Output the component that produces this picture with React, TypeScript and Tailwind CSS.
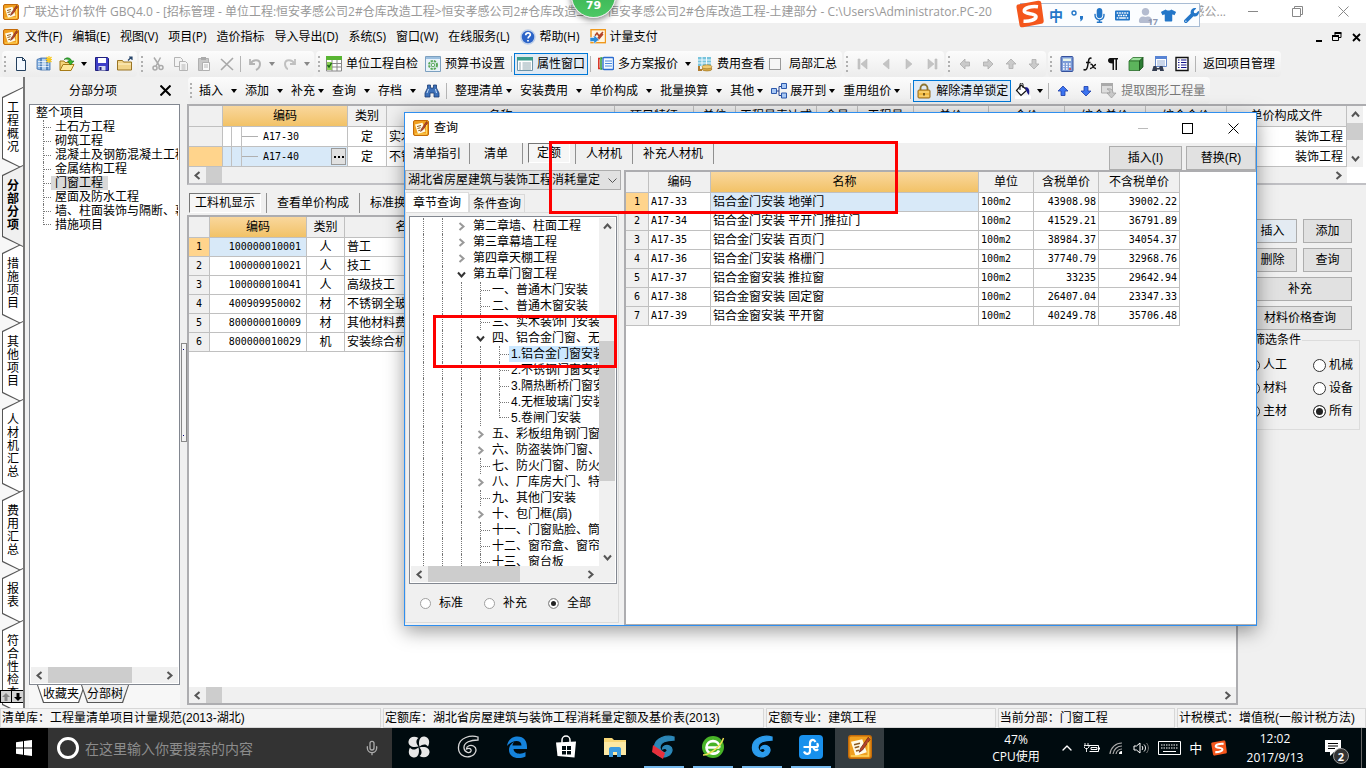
import React from "react";
import { FaTshirt, FaWrench, FaMicrophone, FaKeyboard, FaUser } from "react-icons/fa";
import { LuChevronUp, LuMic } from "react-icons/lu";

const SONG = "font-['Liberation_Sans','Noto_Sans_CJK_SC',sans-serif]";
const UI = "font-['Open_Sans','Noto_Sans_CJK_SC',sans-serif]";
const NUM = "font-['DejaVu_Sans_Mono','Noto_Sans_CJK_SC',monospace] text-[10px]";

type Kids = { children?: React.ReactNode };

/* ---------- icons ---------- */
const Svg = ({ children, s = "size-4", box = "0 0 16 16" }: Kids & { s?: string; box?: string }) => (
  <svg className={`${s} shrink-0`} viewBox={box} fill="none" aria-hidden="true">{children}</svg>
);

const AppIcon = ({ s = "size-4" }: { s?: string }) => (
  <Svg s={s}>
    <rect x=".5" y=".5" width="15" height="15" rx="1.5" fill="#f0a020" stroke="#c46a08" />
    <path d="M2 4.500 9.500 2.800l3 8.700L5 14z" fill="#fffbe8" />
    <path d="M4 6.500l4-1M4.500 8.500l3-.8M5.300 10.700l2-.5" stroke="#8c5a20" />
    <path d="M13.500 1.500 8.300 9l-.8 2.500L9.700 10l5-7z" fill="#b4432a" stroke="#6d2413" strokeWidth=".5" />
    <path d="M2 14h11.500V5" stroke="#ffd65c" />
  </Svg>
);
const Arrow = ({ dim = false }: { dim?: boolean }) => (
  <svg className="h-[4px] w-[6px] shrink-0" viewBox="0 0 6 4" aria-hidden="true"><path d="M0 0h6L3 4z" fill={dim ? "#888" : "#000"} /></svg>
);
const NewDoc = () => <Svg><path d="M3.500 1.500h6l3 3v10h-9z" fill="#f4f9ff" stroke="#24405e" /><path d="M9.500 1.500v3h3" stroke="#24405e" /></Svg>;
const NewProject = () => (
  <Svg>
    <path d="M1 3.500 5 2v12l-4-1zM5 2h6v12H5zM11 4h3v10h-3z" fill="#8eb8e6" stroke="#3c6ca8" strokeWidth=".8" />
    <path d="M2 5.500h11M2 8h11M2 10.500h11M7 3v11M9 3v11" stroke="#fff" strokeWidth=".7" />
    <path d="M13 0v7M9.500 3.500h7M10.500 1l5 5M15.500 1l-5 5" stroke="#f7c81e" strokeWidth="1.200" />
  </Svg>
);
const OpenIcon = () => (
  <Svg>
    <path d="M1 14V5h4l1 1.500h6V9" fill="#f6d57a" stroke="#a67b16" />
    <path d="M1 14.500 4 8.500h11l-3 6z" fill="#ffe89a" stroke="#a67b16" />
    <path d="M5 3.500C8 .5 12 2 12.500 5H15l-3.500 4L8.500 5h2C10 3.500 8 2.500 5 3.500z" fill="#38b430" stroke="#14701a" strokeWidth=".6" />
  </Svg>
);
const SaveIcon = () => <Svg><path d="M1.500 1.500h12l1 1v12h-13z" fill="#3f3fc8" stroke="#20207c" /><path d="M4 2h8v5H4z" fill="#fff" /><path d="M4.500 10h7v4.500h-7z" fill="#d8dcf0" /><path d="M5.500 11h2v3h-2z" fill="#20207c" /></Svg>;
const FolderIcon = () => <Svg><path d="M.5 14V4.500h5l1 1.500h8v8z" fill="#f2d48a" stroke="#9a7424" /><path d="M1 8h13" stroke="#fff3cc" /><path d="M11 4.500 14.500 1M12 1h3v3" stroke="#28466c" strokeWidth="1.200" /></Svg>;
const CutIcon = () => <Svg><path d="M4 1.500 9.500 10M10.500 1.500 6 10" stroke="#aaa" strokeWidth="1.500" /><circle cx="5" cy="12" r="2" stroke="#aaa" strokeWidth="1.500" /><circle cx="11" cy="11.500" r="2" stroke="#aaa" strokeWidth="1.500" /></Svg>;
const CopyIcon = () => <Svg><path d="M1.500 1.500h6l2 2v7h-8z" fill="#f4f4f4" stroke="#b4b4b4" /><path d="M6.500 5.500h6l2 2v7h-8z" fill="#f4f4f4" stroke="#b4b4b4" /><path d="M8.500 9h4M8.500 11h4M8.500 13h4" stroke="#b4b4b4" /></Svg>;
const PasteIcon = () => <Svg><path d="M2.500 2.500h10v12h-10z" fill="#c8c8c8" stroke="#b0b0b0" /><path d="M5 1h5v3H5z" fill="#aaa" /><path d="M6.500 6.500h7v8h-7z" fill="#fafafa" stroke="#b0b0b0" /><path d="M8 9h4M8 11h4" stroke="#b8b8b8" /></Svg>;
const DelIcon = () => <Svg><path d="M2 3l12 11M14 2 2 14" stroke="#a8a8a8" strokeWidth="1.600" /></Svg>;
const UndoIcon = () => <Svg><path d="M3 3v5h5" stroke="#b4b4b4" strokeWidth="1.800" /><path d="M3.500 7.500C6 3 13 3 13 8c0 3-2 5-4 6" stroke="#b4b4b4" strokeWidth="2" /></Svg>;
const RedoIcon = () => <Svg><path d="M13 3v5H8" stroke="#c0c0c0" strokeWidth="1.800" /><path d="M12.500 7.500C10 3 3 3 3 8c0 3 2 5 3 5" stroke="#c0c0c0" strokeWidth="2" /></Svg>;
const CheckSheet = () => <Svg><path d="M.5 1h15v14H.5z" fill="#fff" stroke="#888" /><path d="M0 0h16v4H0z" fill="#58b432" /><path d="M1 7.500h14M1 11h14M6 4v11M11 4v11" stroke="#888" /><path d="M1 6h5v8H1z" fill="#8ed058" /><path d="M1.500 9l1.500 2 2.500-4" stroke="#146414" strokeWidth="1.400" /></Svg>;
const BudgetIcon = () => <Svg><path d="M.5.5h15v15H.5z" fill="#e8f2fa" stroke="#7ca0c0" /><path d="M1 1h14v2H1z" fill="#9cc0e0" /><circle cx="8" cy="9" r="4" stroke="#58a858" strokeWidth="2" strokeDasharray="2.200 1" /><circle cx="8" cy="9" r="1.800" stroke="#58a858" /></Svg>;
const PropIcon = () => <Svg><path d="M.5 1.500h15v13H.5z" fill="#fff" stroke="#6c94a8" /><path d="M0 1h16v3.500H0z" fill="#3c9c8c" /><path d="M2 7h2M5.500 7H14M2 9h2M5.500 9H14M2 11h2M5.500 11H14M2 13h2M5.500 13H14" stroke="#90a8b0" /></Svg>;
const QuoteIcon = () => <Svg><path d="M2 2.500H.8v10H2" stroke="#d83020" strokeWidth="1.500" /><path d="M4.500 2H3v11h1.500" stroke="#2c9c34" strokeWidth="1.500" /><rect x="5" y="1.500" width="10.500" height="12" rx="1" fill="#f4faff" stroke="#2c6cd0" strokeWidth="1.400" /><path d="M7 5h7M7 7.500h7M7 10h7" stroke="#4c88dc" /></Svg>;
const FeeIcon = () => <Svg><path d="M1 1h13v9H1z" fill="#78c4dc" /><path d="M1 4h13M1 7h13M5 1v9M9.500 1v9" stroke="#f0faff" /><ellipse cx="10" cy="13" rx="5" ry="2" fill="#d8a848" stroke="#9c7420" strokeWidth=".6" /><ellipse cx="10" cy="10.800" rx="5" ry="2" fill="#f0cc74" stroke="#9c7420" strokeWidth=".6" /><path d="M2 10v4h3" stroke="#b07c30" strokeWidth="2" /></Svg>;
const Nav = ({ d }: { d: string }) => <Svg><path d={d} fill="#c4c4c4" stroke="#bcbcbc" strokeWidth=".6" /></Svg>;
const BlockArrow = ({ r = 0, blue = false }: { r?: number; blue?: boolean }) => (
  <Svg><path d="M8 3l5 5h-3v4.500H6V8H3z" transform={`rotate(${r} 8 8)`} fill={blue ? "#3c74f0" : "#cacaca"} stroke={blue ? "#1c3ca8" : "#acacac"} strokeWidth=".8" /></Svg>
);
const CalcIcon = () => <Svg><rect x="2" y=".5" width="12" height="15" rx="1" fill="#7c9cd8" stroke="#34509c" /><path d="M4 2.500h8V5H4z" fill="#e8f4e8" /><path d="M4 8h8M4 10.500h8M4 13h8" stroke="#fff" strokeWidth="1.600" strokeDasharray="1.600 1.400" /><path d="M10 13h2" stroke="#d02c2c" strokeWidth="1.600" /></Svg>;
const FxIcon = () => <Svg><path d="M9.500 2.500C7 1 6.500 4 6 8s-1.500 7-4.500 5.500M4 6.500h4.500" stroke="#111" strokeWidth="1.500" /><path d="M8.500 8.500c3-1.500 1.500 4.500 5.500 4M14 8.500c-2 0-3.500 4.500-6 4" stroke="#111" strokeWidth="1.400" /></Svg>;
const ParaIcon = () => <Svg><path d="M3 4.500C3 2.500 4.500 2 6 2h7v1.500h-1V14h-1.500V3.500H9V14H7.500V7.500C4.500 7.500 3 6.500 3 4.500z" fill="#111" /></Svg>;
const CubeIcon = () => <Svg><path d="M1 5l4-3.500h10L11.500 5z" fill="#9ce09c" stroke="#286c28" strokeWidth=".8" /><path d="M1 5h10.500v9.500H1z" fill="#5cb45c" stroke="#286c28" strokeWidth=".8" /><path d="M11.500 5 15 1.500V11l-3.500 3.500z" fill="#2c7c34" stroke="#184c18" strokeWidth=".8" /></Svg>;
const FindSheet = () => <Svg><path d="M4.500.5h11v10h-11z" fill="#fff" stroke="#6488c8" /><path d="M4 0h12v3H4z" fill="#5884d4" /><path d="M6 5h8M6 7h8M6 9h8" stroke="#94acd4" /><path d="M1 15l1.500-5H5l1 2h2l1-2h2.500L13 15H9v-1.500H6V15z" fill="#333c50" /></Svg>;
const ListIcon = () => <Svg><path d="M2 1.500h12v13H2z" fill="#fff" stroke="#111" strokeWidth="1.400" /><path d="M4 4h1.500M7 4h5.500M4 6.500h1.500M7 6.500h5.500M4 9h1.500M7 9h5.500M4 11.500h1.500M7 11.500h5.500" stroke="#14148c" strokeWidth="1.200" /></Svg>;
const Binoc = () => <Svg><path d="M3.500 2h3v3h3V2h3v3l2.500 5v4h-5v-4H6v4H1v-4l2.500-5z" fill="#3c70b8" stroke="#1c3c74" strokeWidth=".8" /><path d="M4.500 6 3 10M11.500 6l1 4" stroke="#c4dcf8" /></Svg>;
const ExpandIcon = () => <Svg><path d="M4 8h4M8 3.500v9M8 3.500h2M8 12.500h2" stroke="#24408c" /><path d="M.5 5.500h5v5h-5zM10.500.5h5v5h-5zM10.500 10h5v5h-5z" fill="#a8c8f4" stroke="#2c58ac" /></Svg>;
const LockIcon = () => <Svg><path d="M4.500 8V5a3.500 3.500 0 0 1 7 0v3" stroke="#8c7430" strokeWidth="1.800" /><rect x="2" y="7" width="12" height="8" rx="1" fill="#f0b840" stroke="#94681c" /><path d="M3 9h10M3 13h10" stroke="#ffe08c" /><path d="M8 10v2.500" stroke="#503808" strokeWidth="1.500" /></Svg>;
const PaintIcon = () => <Svg><path d="M0 12.500h16V16H0z" fill="#fff" /><path d="M6 2l6 5-6 5.500L1.500 7.500z" fill="#fff" stroke="#111" strokeWidth="1.200" /><path d="M5 7V1.500a1.500 1.500 0 0 1 3 0V5" stroke="#111" /><path d="M10 4c4 0 5 3 4 8-1.500-1-2-3-3-5z" fill="#1c1c8c" /></Svg>;
const ExtractIcon = () => <Svg><path d="M.5 1h11v9H.5z" fill="#ddd" stroke="#aaa" /><path d="M0 0h12v3H0z" fill="#aaa" /><path d="M6 6c4-1 6 1 6 4h3l-4.500 5L6 10h3c0-2-1-3-3-4z" fill="#c8c8c8" stroke="#999" strokeWidth=".7" /></Svg>;
const HelpIcon = () => <Svg><circle cx="8" cy="8" r="7" fill="#2c64c8" stroke="#c0d0e8" strokeWidth="1.500" /><path d="M5.700 6.200C5.700 3 10.500 3.200 10.300 6c-.1 1.500-2.200 1.500-2.200 3.500M8 11v1.500" stroke="#fff" strokeWidth="1.700" /></Svg>;
const PayIcon = () => <Svg><rect x="1" y=".7" width="14.500" height="13" fill="#fff6e0" stroke="#f0981c" strokeWidth="1.400" /><path d="M4 8l3-4 2 3 4-4" stroke="#b04424" strokeWidth="1.500" /><path d="M5 11l7-7 1.500 1.500L8 12z" fill="#b4432a" /><path d="M0 8.500h4V6l5 4.500L4 15v-2.500H0z" fill="#2c8cd8" stroke="#fff" strokeWidth=".5" /></Svg>;
const CloseX = ({ c = "#000", w = 1 }: { c?: string; w?: number }) => <Svg s="size-[11px]" box="0 0 11 11"><path d="M.5.5l10 10M10.500.5l-10 10" stroke={c} strokeWidth={w} /></Svg>;

const Chev = ({ d, c = "#555" }: { d: "l" | "r" | "u" | "d"; c?: string }) => {
  const p = { l: "M6.500 1 2.500 4.500l4 3.500", r: "M2.500 1l4 3.500-4 3.500", u: "M1 6.500l3.500-4 3.500 4", d: "M1 2.500l3.500 4 3.500-4" }[d];
  return <Svg s="size-[9px]" box="0 0 9 9"><path d={p} stroke={c} strokeWidth="2" /></Svg>;
};

/* ---------- toolbar parts ---------- */
const Group = ({ children }: Kids) => (
  <div className="flex h-full items-center rounded-sm bg-linear-to-b from-[#fcfcfc] to-[#ececec] pr-px">
    <span className="mx-[2px] flex h-4 w-[3px] shrink-0 flex-col justify-between">
      {[0, 1, 2, 3].map((i) => <i key={i} className="size-[2px] bg-[#b0b0b0]" />)}
    </span>
    {children}
  </div>
);
const IB = ({ children, label }: Kids & { label: string }) => (
  <button aria-label={label} className="flex h-[22px] w-[23px] shrink-0 items-center justify-center">{children}</button>
);
const Drop = ({ dim, label }: { dim?: boolean; label: string }) => (
  <button aria-label={label} className="flex h-[22px] w-3 shrink-0 items-center justify-center"><Arrow dim={dim} /></button>
);
const Sep = () => <i className="mx-[2px] h-4 w-px shrink-0 bg-[#b4b4b4]" />;
const TB = ({ icon, children }: Kids & { icon: React.ReactNode }) => (
  <button className="flex h-[22px] shrink-0 items-center gap-1 pr-1 pl-[3px]">{icon}{children}</button>
);
const On = ({ icon, children }: Kids & { icon: React.ReactNode }) => (
  <button aria-pressed="true" className="flex h-[22px] shrink-0 items-center gap-1 border border-[#0078d7] bg-[#e0eaf4] px-[2px]">{icon}{children}</button>
);
const Menu = ({ children, tight, icon }: Kids & { tight?: boolean; icon?: React.ReactNode }) => (
  <button className={`flex h-[22px] shrink-0 items-center pr-2 ${tight ? "gap-[3px]" : "gap-2"}`}>{icon}{children}<Arrow /></button>
);

/* ---------- scrollbars ---------- */
const HScroll = ({ thumb }: { thumb: string }) => (
  <div className="flex h-4 shrink-0 items-center bg-[#f0f0f0]">
    <button aria-label="向左" className="flex w-[17px] justify-center"><Chev d="l" /></button>
    <div className="h-full flex-1"><div className={`h-full bg-[#cdcdcd] ${thumb}`} /></div>
    <button aria-label="向右" className="flex w-[17px] justify-center"><Chev d="r" /></button>
  </div>
);
const VScroll = ({ thumb }: { thumb: string }) => (
  <div className="flex w-4 shrink-0 flex-col items-center bg-[#f0f0f0]">
    <button aria-label="向上" className="flex h-[17px] items-center"><Chev d="u" /></button>
    <div className="w-full flex-1"><div className={`w-full bg-[#cdcdcd] ${thumb}`} /></div>
    <button aria-label="向下" className="flex h-[17px] items-center"><Chev d="d" /></button>
  </div>
);

const CELL = "overflow-hidden whitespace-nowrap border-r border-b border-[#c0c0c0] p-0 leading-[14px]";
const HEAD = `${CELL} h-[21px] bg-[#f0f0f0] text-center font-normal`;
const GOLD = "bg-linear-to-b from-[#f9d79c] to-[#f2c266]";
const Push = "flex h-[24px] items-center justify-center border border-[#adadad] bg-[#e1e1e1]";
const SunkTab = "flex h-[20px] items-center border border-t-[#777] border-l-[#777] border-r-white border-b-white bg-[#f6f6f6]";

/* ---------- left side ---------- */
const sideTabs = ["工程概况", "分部分项", "措施项目", "其他项目", "人材机汇总", "费用汇总", "报表", "符合性检查"];
const TABCLIP = "[clip-path:polygon(0_10px,100%_0,100%_100%,0_calc(100%-10px))]";

const SideTabs = () => (
  <nav className="relative flex w-[25px] shrink-0 flex-col overflow-hidden border-r-2 border-[#777] bg-[#f7f7f7] pt-[14px] pl-[2px]">
    {sideTabs.map((t) => {
      const on = t === "分部分项";
      return (
        <button key={t} className={`-mt-1 flex shrink-0 bg-[#555] py-px pl-px ${TABCLIP} ${on ? "relative z-10" : ""}`}>
          <span className={`flex w-full justify-center py-[14px] ${TABCLIP} ${on ? "bg-[#f0f0f0] font-bold" : "bg-white"}`}>
            <span className="w-[13px] text-[12px] leading-[13px] break-all">{t}</span>
          </span>
        </button>
      );
    })}
    <div className="absolute bottom-[5px] left-0 z-20 flex border border-black bg-[#d4d4d4]">
      <button aria-label="上一页" className="flex size-[11px] items-center justify-center border-r border-black"><Svg s="size-2" box="0 0 8 8"><path d="M4 0l4 4H5.500v4h-3V4H0z" fill="#888" /></Svg></button>
      <button aria-label="下一页" className="flex size-[11px] items-center justify-center"><Svg s="size-2" box="0 0 8 8"><path d="M4 8L0 4h2.500V0h3v4H8z" fill="#000" /></Svg></button>
    </div>
  </nav>
);

const sections = ["土石方工程", "砌筑工程", "混凝土及钢筋混凝土工程", "金属结构工程", "门窗工程", "屋面及防水工程", "墙、柱面装饰与隔断、幕墙", "措施项目"];
const BTAB = "[clip-path:polygon(0_0,100%_0,calc(100%-6px)_100%,6px_100%)]";

const SectionPanel = () => (
  <aside className="flex w-[151px] shrink-0 flex-col">
    <header className="flex h-[27px] items-center pl-10 pr-[9px]">
      <h2 className="flex-1">分部分项</h2>
      <button aria-label="关闭"><CloseX w={2} /></button>
    </header>
    <div className="flex min-h-0 flex-1 flex-col border border-[#828790] bg-white p-px">
      <ul className="flex-1 overflow-hidden pl-[5px] leading-[14px]">
        <li className="h-[14px]">整个项目</li>
        {sections.map((s, i) => (
          <li key={s} className="flex h-[14px] pl-[7px] whitespace-nowrap">
            <span className={`flex w-2 shrink-0 items-center border-l border-dotted border-[#777] ${i === sections.length - 1 ? "h-[7px] items-end" : ""}`}><i className="w-full border-t border-dotted border-[#777]" /></span>
            <span className={`pr-[5px] pl-1 ${s === "门窗工程" ? "bg-[#d9d9d9]" : ""}`}>{s}</span>
          </li>
        ))}
      </ul>
      <HScroll thumb="w-[74%]" />
    </div>
    <div className="flex h-[23px] items-start bg-[#f7f7f7] pl-2">
      {["收藏夹", "分部树"].map((t, i) => (
        <button key={t} className={`-mr-1 flex bg-[#555] px-px pb-px ${BTAB}`}>
          <span className={`flex h-[17px] items-center px-[5px] ${BTAB} ${i ? "bg-[#f0f0f0]" : "bg-white"}`}>{t}</span>
        </button>
      ))}
    </div>
  </aside>
);

/* ---------- top grid ---------- */
const topCols: [string, string][] = [
  ["", "w-[34px]"], ["编码", "w-[125px]"], ["类别", "w-[39px]"], ["名称", ""], ["项目特征", "w-[79px]"], ["单位", "w-[42px]"],
  ["工程量表达式", "w-[81px]"], ["含量", "w-[41px]"], ["工程量", "w-[56px]"], ["单价", "w-[75px]"], ["合价", "w-[76px]"],
  ["综合单价", "w-[81px]"], ["综合合价", "w-[81px]"], ["单价构成文件", "w-[120px]"],
];
const topRows = [["A17-30", "定", "实木门"], ["A17-40", "定", "不锈钢"]];

const TopGrid = () => (
  <section className="flex flex-col border-2 border-r-0 border-[#adadb0] border-b-[#c0c0c4] bg-white pr-[3px]">
    <div className="flex">
      <table className="w-full min-w-0 flex-1 table-fixed border-separate border-spacing-0">
        <thead><tr>{topCols.map(([t, w]) => <th key={t} className={`${HEAD} ${w} ${t === "编码" ? GOLD : ""}`}>{t}</th>)}</tr></thead>
        <tbody>
          {topRows.map(([code, kind, name], r) => (
            <tr key={code}>
              <td className={`${CELL} h-[20px] ${r ? "bg-[#ffd48c]" : "bg-[#f0f0f0]"}`} />
              <td className={`${CELL} ${r ? "bg-[#d8e9f8]" : ""}`}>
                <div className="flex h-[19px] items-center pl-2">
                  <i className="h-full w-[10px] border-l border-[#c0c0c0]" />
                  <i className="flex h-full w-[17px] items-center border-l border-[#c0c0c0]"><i className="h-px w-full bg-[#b0b0b0]" /></i>
                  <span className={`flex-1 pl-[5px] ${NUM}`}>{code}</span>
                  {r === 1 && <button aria-label="选择编码" className="mr-px flex h-[17px] w-[15px] items-center justify-center border border-[#999] bg-[#e1e1e1]"><Svg s="h-[2px] w-[10px]" box="0 0 10 2"><path d="M0 0h2v2H0zM4 0h2v2H4zM8 0h2v2H8z" fill="#000" /></Svg></button>}
                </div>
              </td>
              <td className={`${CELL} text-center`}>{kind}</td>
              <td className={`${CELL} pl-[2px]`}>{name}</td>
              {topCols.slice(4, 13).map(([t]) => <td key={t} className={CELL} />)}
              <td className={`${CELL} pr-[3px] text-right`}>装饰工程</td>
            </tr>
          ))}
        </tbody>
      </table>
      <VScroll thumb="h-[17px]" />
    </div>
    <div className="pr-4"><HScroll thumb="w-4" /></div>
  </section>
);

/* ---------- resource table ---------- */
const resources = [
  ["100000010001", "人", "普工"], ["100000010021", "人", "技工"], ["100000010041", "人", "高级技工"],
  ["400909950002", "材", "不锈钢全玻"], ["800000010009", "材", "其他材料费"], ["800000010029", "机", "安装综合机"],
];

const Lower = () => (
  <section className="flex min-w-0 flex-1 flex-col">
    <div className="flex h-[30px] items-center pt-[5px] pl-[2px] whitespace-nowrap">
      <button aria-pressed="true" className={`${SunkTab} px-[5px]`}>工料机显示</button>
      <i className="mx-[5px] h-5 w-px bg-[#909090]" />
      <button className="px-[5px]">查看单价构成</button>
      <i className="mx-[5px] h-5 w-px bg-[#909090]" />
      <button className="px-[5px]">标准换算</button>
    </div>
    <div className="flex min-h-0 flex-1 flex-col border-2 border-[#adadb0] bg-white">
      <div className="flex-1">
        <table className="table-fixed border-separate border-spacing-0">
          <thead>
            <tr>
              <th className={`${HEAD} w-[21px]`} /><th className={`${HEAD} ${GOLD} w-[97px]`}>编码</th>
              <th className={`${HEAD} w-[38px]`}>类别</th><th className={`${HEAD} w-[126px]`}>名称</th>
            </tr>
          </thead>
          <tbody>
            {resources.map(([code, kind, name], i) => (
              <tr key={code}>
                <td className={`${CELL} ${NUM} h-[19px] text-center ${i ? "bg-[#f0f0f0]" : "bg-[#ffd48c]"}`}>{i + 1}</td>
                <td className={`${CELL} ${NUM} pr-[5px] text-right ${i ? "" : "bg-[#d8e9f8]"}`}>{code}</td>
                <td className={`${CELL} text-center`}>{kind}</td>
                <td className={`${CELL} pl-[2px]`}>{name}</td>
              </tr>
            ))}
          </tbody>
        </table>
      </div>
      <HScroll thumb="w-4" />
    </div>
  </section>
);

const Radio = ({ name, label, on, faint }: { name: string; label: string; on?: boolean; faint?: boolean }) => (
  <label className={`flex items-center whitespace-nowrap ${faint ? "w-16 gap-2" : "gap-[3px]"}`}>
    <input type="radio" name={name} defaultChecked={on} className={`shrink-0 appearance-none rounded-full border bg-white checked:bg-[#222] ${faint ? "size-[11px] border-[#a0a0a0] checked:shadow-[inset_0_0_0_2px_#fff]" : "size-[13px] border-[#333] checked:shadow-[inset_0_0_0_2px_#fff]"}`} />
    {label}
  </label>
);

const FilterPanel = () => (
  <aside className="flex w-[128px] shrink-0 flex-col pt-[34px] pr-[6px] pl-[8px]">
    <div className="grid grid-cols-2 gap-x-[6px] gap-y-[5px] pr-2 pl-[2px]">
      <button className={`${Push} border-[#7a9cb8] bg-[#e4ebf2]`}>插入</button>
      <button className={Push}>添加</button>
      <button className={Push}>删除</button>
      <button className={Push}>查询</button>
      <button className={`${Push} col-span-2`}>补充</button>
      <button className={`${Push} col-span-2`}>材料价格查询</button>
    </div>
    <fieldset className="mt-[3px] border border-[#dcdcdc] pb-[9px]">
      <legend className="ml-[5px] px-px leading-[14px]">筛选条件</legend>
      <div className="grid grid-cols-[54px_1fr] gap-x-[12px] gap-y-[5px] pt-[9px]">
        <Radio name="filter" label="人工" /><Radio name="filter" label="机械" />
        <Radio name="filter" label="材料" /><Radio name="filter" label="设备" />
        <Radio name="filter" label="主材" /><Radio name="filter" label="所有" on />
      </div>
    </fieldset>
  </aside>
);

/* ---------- query dialog ---------- */
type Node = [string, number, "open" | "shut" | "leaf" | "last"];
const nodes: Node[] = [
  ["第二章墙、柱面工程", 0, "shut"], ["第三章幕墙工程", 0, "shut"], ["第四章天棚工程", 0, "shut"], ["第五章门窗工程", 0, "open"],
  ["一、普通木门安装", 1, "leaf"], ["二、普通木窗安装", 1, "leaf"], ["三、实木装饰门安装", 1, "leaf"], ["四、铝合金门窗、无框", 1, "open"],
  ["1.铝合金门窗安装", 2, "leaf"], ["2.不锈钢门窗安装", 2, "leaf"], ["3.隔热断桥门窗安装", 2, "leaf"], ["4.无框玻璃门安装", 2, "leaf"], ["5.卷闸门安装", 2, "last"],
  ["五、彩板组角钢门窗", 1, "shut"], ["六、防盗装饰门窗、", 1, "shut"], ["七、防火门窗、防火", 1, "leaf"], ["八、厂库房大门、特", 1, "shut"],
  ["九、其他门安装", 1, "leaf"], ["十、包门框(扇)", 1, "shut"], ["十一、门窗贴脸、筒", 1, "leaf"], ["十二、窗帘盒、窗帘", 1, "leaf"], ["十三、窗台板", 1, "leaf"],
];

const TreeRow = ({ n: [text, depth, kind] }: { n: Node }) => (
  <li className="flex h-4 shrink-0 pl-[3px] leading-4 whitespace-nowrap">
    {Array.from({ length: depth + 2 }, (_, i) => <i key={i} className="ml-[9px] w-[10px] shrink-0 border-l border-dotted border-[#777]" />)}
    {kind === "leaf" || kind === "last" ? (
      <i className={`ml-[9px] flex w-[10px] shrink-0 border-l border-dotted border-[#777] ${kind === "last" ? "h-2 items-end" : "items-center"}`}><i className="w-full border-t border-dotted border-[#777]" /></i>
    ) : (
      <button aria-label={text} className="flex w-[19px] shrink-0 items-center justify-center"><Chev d={kind === "open" ? "d" : "r"} c={kind === "open" ? "#333" : "#999"} /></button>
    )}
    <span className={`px-[2px] ${text.startsWith("1.") ? "bg-[#cce8ff]" : ""}`}>{text}</span>
  </li>
);

const quotas = [
  ["A17-33", "铝合金门安装 地弹门", "43908.98", "39002.22"], ["A17-34", "铝合金门安装 平开门推拉门", "41529.21", "36791.89"],
  ["A17-35", "铝合金门安装 百页门", "38984.37", "34054.37"], ["A17-36", "铝合金门安装 格栅门", "37740.79", "32968.76"],
  ["A17-37", "铝合金窗安装 推拉窗", "33235", "29642.94"], ["A17-38", "铝合金窗安装 固定窗", "26407.04", "23347.33"],
  ["A17-39", "铝合金窗安装 平开窗", "40249.78", "35706.48"],
];

const VBar = () => <i className="h-[21px] w-px shrink-0 bg-[#909090]" />;

const QueryDialog = () => (
  <div role="dialog" aria-label="查询" className="absolute top-[112px] left-[404px] flex h-[514px] w-[853px] flex-col border border-[#2f8fef] bg-[#f0f0f0] shadow-[0_5px_18px_rgba(0,0,0,0.4)]">
    <header className={`flex h-[30px] shrink-0 items-center bg-white pl-2 ${UI}`}>
      <AppIcon /><h2 className="ml-[5px] flex-1">查询</h2>
      <button aria-label="最小化" className="flex w-[45px] justify-center"><i className="h-px w-[10px] bg-[#bbb]" /></button>
      <button aria-label="最大化" className="flex w-[45px] justify-center"><i className="size-[11px] border border-black" /></button>
      <button aria-label="关闭" className="flex w-[46px] justify-center"><CloseX /></button>
    </header>
    <div className="flex h-[27px] shrink-0 items-start whitespace-nowrap">
      <button className="h-[21px] px-2">清单指引</button><VBar />
      <button className="h-[21px] px-[14px]">清单</button><VBar />
      <span className="px-[5px]"><button aria-pressed="true" className={`${SunkTab} px-2`}>定额</button></span><VBar />
      <button className="h-[21px] px-[10px]">人材机</button><VBar />
      <button className="h-[21px] px-[10px]">补充人材机</button><VBar />
      <span className="flex-1" />
      <button className={`${Push} mt-[3px] mr-1 w-[73px]`}>插入(I)</button>
      <button className={`${Push} mt-[3px] w-[70px]`}>替换(R)</button>
    </div>
    <div className="flex min-h-0 flex-1">
      <div className="flex w-[216px] shrink-0 flex-col">
        <div className="relative flex">
          <select aria-label="定额库" className="h-[20px] w-full appearance-none border border-[#adadad] bg-[#e1e1e1] pl-[2px]">
            <option>湖北省房屋建筑与装饰工程消耗量定</option>
          </select>
          <span className="pointer-events-none absolute inset-y-0 right-1 flex items-center"><Svg s="size-[9px]" box="0 0 9 9"><path d="M.5 2.500l4 4 4-4" stroke="#555" /></Svg></span>
        </div>
        <div className="flex h-[22px] items-end pt-[2px]">
          <button className="h-[20px] border border-b-0 border-[#dcdcdc] bg-white px-[7px]">章节查询</button>
          <button className="h-[18px] border border-b-0 border-[#d9d9d9] px-[3px]">条件查询</button>
        </div>
        <div className="mr-[2px] mb-[2px] flex min-h-0 flex-1 flex-col border border-[#dcdcdc] bg-[#f0f0f0] pr-px pl-[3px]">
          <div className="mt-[3px] flex min-h-0 flex-1 flex-col border border-[#828790] bg-white p-px">
            <div className="flex min-h-0 flex-1">
              <ul className="flex min-w-0 flex-1 flex-col overflow-hidden">{nodes.map((n) => <TreeRow key={n[0]} n={n} />)}</ul>
              <VScroll thumb="mt-[106px] h-[140px]" />
            </div>
            <div className="flex bg-[#f0f0f0]"><div className="flex-1"><HScroll thumb="w-[60%]" /></div><i className="w-4" /></div>
          </div>
          <div className="flex h-[38px] shrink-0 items-center pl-[11px]">
            <Radio name="scope" label="标准" faint /><Radio name="scope" label="补充" faint /><Radio name="scope" label="全部" faint on />
          </div>
        </div>
      </div>
      <div className="ml-[3px] min-w-0 flex-1 border-2 border-r-0 border-[#adadb0] border-b bg-white">
        <table className="w-[554px] table-fixed border-separate border-spacing-0">
          <thead>
            <tr>
              <th className={`${HEAD} w-[23px]`} /><th className={`${HEAD} w-[62px]`}>编码</th><th className={`${HEAD} ${GOLD}`}>名称</th>
              <th className={`${HEAD} w-[55px]`}>单位</th><th className={`${HEAD} w-[65px]`}>含税单价</th><th className={`${HEAD} w-[81px]`}>不含税单价</th>
            </tr>
          </thead>
          <tbody>
            {quotas.map(([code, name, a, b], i) => (
              <tr key={code}>
                <td className={`${CELL} ${NUM} h-[19px] text-center ${i ? "bg-[#f0f0f0]" : "bg-[#ffd48c]"}`}>{i + 1}</td>
                <td className={`${CELL} ${NUM} pl-[2px]`}>{code}</td>
                <td className={`${CELL} pl-[2px] ${i ? "" : "bg-[#d8e9f8]"}`}>{name}</td>
                <td className={`${CELL} ${NUM} pl-[2px]`}>100m2</td>
                <td className={`${CELL} ${NUM} pr-[2px] text-right`}>{a}</td>
                <td className={`${CELL} ${NUM} pr-[2px] text-right`}>{b}</td>
              </tr>
            ))}
          </tbody>
        </table>
      </div>
    </div>
  </div>
);

/* ---------- floating overlays ---------- */
const SogouS = ({ s }: { s: string }) => (
  <Svg s={s} box="0 0 28 28">
    <path d="M2 4.500 22 .8c2-.3 3 .5 3.300 2.200l2.400 17.500c.2 2-.6 3-2.400 3.300L7 27.300c-2 .3-3.200-.5-3.500-2.300L.5 7.500C.3 5.700.8 4.800 2 4.500z" fill="#f4561c" />
    <path d="M22 6.800C16 6 8 7.500 8.300 11.200c.3 3.300 11.500 1.800 11.700 5.300.2 3.500-7 5-12.500 4.700" stroke="#fff" strokeWidth="3.600" />
  </Svg>
);
const ImeBar = () => (
  <div className={`absolute top-[3px] left-[1020px] flex h-6 w-[180px] items-center gap-2 border border-[#a8bcd4] bg-[#fbfdff] pl-[28px] text-[15px] text-[#2376c8] ${UI}`}>
    <span className="absolute -top-[4px] -left-[5px]"><SogouS s="size-7" /></span>
    <b className="text-[14px]">中</b>
    <Svg s="size-[13px]" box="0 0 13 13"><circle cx="3" cy="4" r="2" stroke="#2376c8" strokeWidth="1.400" /><path d="M9 7h3c.5 3-1 5-3 5.500.8-1.500.8-2.500 0-2.500z" fill="#2376c8" /></Svg>
    <FaMicrophone /><FaKeyboard />
    <span className="relative"><FaUser className="text-[#b4bcd0]" /><b className="absolute -right-[5px] -bottom-[3px] text-[9px] leading-[9px] text-[#8c98b4]">17</b></span>
    <FaTshirt /><FaWrench />
  </div>
);

/* ---------- task bar ---------- */
const Pinwheel = () => <Svg s="size-6" box="0 0 24 24"><g fill="#e8e8e8"><path d="M11.500 11.500C6 13 1 11 1.500 6.500 2 2 7 .5 11.500 3 8.500 5 9 8.500 11.500 11.500z" /><path d="M12.500 11.500C11 6 13 1 17.500 1.500c4.500.5 6 5.500 3.500 10-2-3-5.500-2.500-8.500 0z" /><path d="M12.500 12.500c5.500-1.500 10.500.5 10 5-.5 4.500-5.500 6-10 3.500 3-2 2.500-5.500 0-8.500z" /><path d="M11.500 12.500c1.500 5.500-.5 10.500-5 10-4.500-.5-6-5.500-3.500-10 2 3 5.500 2.500 8.500 0z" /></g></Svg>;
const Swirl = ({ c, fill }: { c: string; fill?: boolean }) => (
  <Svg s="size-6" box="0 0 24 24">
    <path d="M22 2C15 0 3 2 2.500 12 2 19 8 23 14 21.500c6-1.500 8-8 3.500-10.500-3-1.700-7 0-7 3 3-1.500 5 0 4.500 2-.7 2.500-6.500 2-7-3C7.500 7 15 5 22 5z" fill={fill ? c : "none"} stroke={c} strokeWidth="1.300" />
  </Svg>
);
const EdgeIcon = () => <Svg s="size-6" box="0 0 24 24"><path d="M2 11C3 4 8 1.500 12.500 1.500 19 1.500 22 6 22 12v2H8.500c.3 5 7.500 6 12 3v4.500C13 25 4 22.500 4 15c0-4 2.500-6.500 5-8-1 1.300-1.500 2.500-1.500 3.500h9c0-6-9-6-14.500.5z" fill="#1583dc" /></Svg>;
const StoreIcon = () => <Svg s="size-6" box="0 0 24 24"><path d="M8 8V5a4 4 0 0 1 8 0v3" stroke="#fff" strokeWidth="1.500" /><path d="M2 7.500l20-1-1.500 16L3.500 21z" fill="#fff" /><path d="M8 11h4v4H8zM13 11h4v4h-4zM8 16h4v3.500H8zM13 16h4v3.500h-4z" fill="#000c10" /></Svg>;
const ExplorerIcon = () => <Svg s="size-6" box="0 0 24 24"><path d="M1 3h8l2 2h12v15H1z" fill="#f8d878" /><path d="M1 7h22v13H1z" fill="#fce9a4" /><path d="M6 22v-8c0-1 .5-2 2-2h8c1.500 0 2 1 2 2v8h-4v-5h-4v5z" fill="#3c9ce0" /></Svg>;
const GreenE = () => <Svg s="size-6" box="0 0 24 24"><circle cx="12" cy="12" r="11" fill="#48b428" /><path d="M18.500 12.500h-13M18.500 12.500c0-8.500-13-8.500-13 0 0 7 10 8 12.500 3" stroke="#fff" strokeWidth="2.600" /><path d="M2 20C8 20 20 12 22.500 3" stroke="#f0e458" strokeWidth="1.400" /></Svg>;
const PlusTile = () => <Svg s="size-6" box="0 0 24 24"><rect width="24" height="24" rx="4" fill="#1890ec" /><path d="M16.500 7c-2-3.500-5.500-2-5.500 1.500V16c0 3.500-4.500 4-6 .5M4.500 12H17c2.500 0 2.500-3 .5-3.500M14.500 12c0 3 3 4 4.500 2" stroke="#fff" strokeWidth="2.200" /></Svg>;

const tasks: [string, React.ReactNode, string][] = [
  ["风扇", <Pinwheel key="i" />, ""], ["旋涡", <Swirl key="i" c="#d8d8d8" />, ""], ["Edge", <EdgeIcon key="i" />, ""],
  ["应用商店", <StoreIcon key="i" />, ""], ["资源管理器", <ExplorerIcon key="i" />, ""],
  ["广联达", <span key="i" className="relative"><Swirl c="#2c88b8" fill /><svg className="absolute top-2 left-0 size-4" viewBox="0 0 16 16" aria-hidden="true"><path d="M1 2l12 8-2 6L0 9z" fill="#e8303c" /></svg></span>, "run"],
  ["浏览器", <GreenE key="i" />, "run"], ["广联达云", <Swirl key="i" c="#2c9cec" fill />, "run"], ["加号", <PlusTile key="i" />, "run"], ["计价软件", <AppIcon key="i" s="size-6" />, "on"],
];

const TaskBar = () => (
  <footer className={`flex h-10 shrink-0 items-stretch bg-[#000b0f] text-white ${UI}`}>
    <button aria-label="开始" className="flex w-12 items-center justify-center bg-black"><Svg><path d="M0 2.200 7 1.200v6.300H0zM8 1l8-1v7.500H8zM0 8.500h7v6.300L0 13.800zM8 8.500h8V16l-8-1z" fill="#fff" /></Svg></button>
    <div className="flex w-[344px] items-center gap-[6px] bg-[#333] pr-[12px] pl-[9px]">
      <i className="size-[22px] shrink-0 rounded-full border-[3px] border-white" />
      <input aria-label="搜索" placeholder="在这里输入你要搜索的内容" className="min-w-0 flex-1 bg-transparent text-[14px] outline-none placeholder:text-[#8c8c8c]" />
      <LuMic className="size-4 text-[#aaa]" />
    </div>
    <div className="flex pl-[2px]">
      {tasks.map(([t, icon, st]) => (
        <button key={t} aria-label={t} className={`flex w-[49px] flex-col items-center ${st === "on" ? "bg-[#343c40]" : ""}`}>
          <span className="flex flex-1 items-center">{icon}</span>
          <i className={`h-[2px] ${st === "run" ? "bg-[#76b9ed]" : ""} w-10`} />
        </button>
      ))}
    </div>
    <div className="ml-auto flex items-center text-[12px] leading-[17px]">
      <div className="w-[66px] text-center">47%<br />CPU使用</div>
      <div className="flex w-[182px] items-center justify-between pr-1 pl-[10px]">
        <LuChevronUp className="size-4" />
        <Svg><path d="M3.500 5.500h11v6h-9M15.500 7.500v2M7 7.500h6v2H7z" stroke="#fff" /><path d="M1 3v2M4 3v2M0 5.500h5v1.500L3.500 8.500h-2L0 7zM2.500 8v4" stroke="#fff" strokeWidth=".9" /></Svg>
        <Svg><path d="M2 14A12 12 0 0 1 14 3M5 14A9 9 0 0 1 14 6M8 14A6 6 0 0 1 14 9" stroke="#aaa" strokeWidth="1.200" /><path d="M11 14a3 3 0 0 1 3-3v3z" fill="#fff" /></Svg>
        <Svg><path d="M1 6h2.500L7 3v10l-3.500-3H1z" stroke="#fff" /><path d="M9 6c1 1 1 3 0 4M11 4.500c2 2 2 5 0 7" stroke="#fff" /><path d="M13.500 3c2.500 3 2.500 7 0 10" stroke="#777" /></Svg>
        <Svg s="h-[14px] w-[23px]" box="0 0 23 14"><path d="M.5.5h22v13H.5z" stroke="#fff" /><path d="M3 4h17M3 7h17" stroke="#fff" strokeDasharray="1.500 1" /><path d="M5 10.500h13" stroke="#fff" /></Svg>
        <span className="text-[13px]">中</span>
        <SogouS s="size-4" />
      </div>
      <div className="ml-[12px] w-[64px] text-center leading-[19px]">12:02<br />2017/9/13</div>
      <button aria-label="通知" className="relative ml-[18px] flex h-10 w-[37px] items-center border-r border-[#666]">
        <Svg s="size-[18px]" box="0 0 18 18"><path d="M0 1h16v12H9l-4 4v-4H0z" fill="#fff" /><path d="M3 4.500h10M3 7h10M3 9.500h7" stroke="#000" /></Svg>
        <b className="absolute bottom-1 left-2 flex size-4 items-center justify-center rounded-full border border-[#999] bg-[#333] text-[11px]">2</b>
      </button>
      <i className="w-1" />
    </div>
  </footer>
);

const status: [string, string][] = [
  ["清单库：工程量清单项目计量规范(2013-湖北)", "flex-[382]"], ["定额库：湖北省房屋建筑与装饰工程消耗量定额及基价表(2013)", "flex-[382]"],
  ["定额专业：建筑工程", "flex-[229]"], ["当前分部：门窗工程", "flex-[176]"], ["计税模式：增值税(一般计税方法)", "flex-[188]"],
];
const menus = ["文件(F)", "编辑(E)", "视图(V)", "项目(P)", "造价指标", "导入导出(D)", "系统(S)", "窗口(W)", "在线服务(L)"];

export default function App() {
  return (
    <div className={`relative flex h-screen flex-col overflow-hidden bg-[#f0f0f0] text-[12px] text-black ${SONG}`}>
      <header className={`flex h-[23px] shrink-0 items-center bg-white pl-[3px] whitespace-nowrap text-[#999] ${UI}`}>
        <AppIcon />
        <h1 className="ml-1 min-w-0 flex-1 overflow-hidden">广联达计价软件 GBQ4.0 - [招标管理 - 单位工程:恒安孝感公司2#仓库改造工程&gt;恒安孝感公司2#仓库改造工程&gt;恒安孝感公司2#仓库改造工程-土建部分 - C:\Users\Administrator.PC-20</h1>
        <span className="mr-1">感公...</span>
        <button aria-label="最小化" className="flex w-[45px] justify-center"><i className="h-px w-[10px] bg-[#888]" /></button>
        <button aria-label="还原" className="flex w-[45px] justify-center"><Svg s="size-[11px]" box="0 0 11 11"><path d="M.5 2.500h8v8h-8zM2.500 2.500v-2h8v8h-2" stroke="#888" /></Svg></button>
        <button aria-label="关闭" className="flex w-[46px] justify-center"><CloseX c="#888" /></button>
      </header>

      <nav className={`flex h-[28px] shrink-0 items-center gap-[10px] pl-[3px] whitespace-nowrap ${UI}`}>
        <span className="-mr-1"><AppIcon /></span>
        {menus.map((m) => <button key={m}>{m}</button>)}
        <button className="flex items-center gap-1"><HelpIcon />帮助(H)</button>
        <button className="flex items-center gap-1"><PayIcon />计量支付</button>
        <span className="ml-auto flex items-center gap-[10px] pr-[5px]">
          <button aria-label="最小化文档" className="flex h-[9px] items-end"><i className="h-[2px] w-[6px] bg-black" /></button>
          <button aria-label="还原文档"><Svg s="size-[10px]" box="0 0 10 10"><path d="M.5 4.500h6v4h-6zM3 4V1.500h6v4H7" stroke="#000" /><path d="M0 4h7M2.500 1H9.500" stroke="#000" strokeWidth="2" /></Svg></button>
          <button aria-label="关闭文档"><Svg s="size-[9px]" box="0 0 9 9"><path d="M1 1l7 7M8 1 1 8" stroke="#000" strokeWidth="1.800" /></Svg></button>
        </span>
      </nav>

      <div className={`flex h-[26px] shrink-0 items-center gap-[2px] pl-[2px] whitespace-nowrap ${UI}`}>
        <Group>
          <IB label="新建"><NewDoc /></IB><IB label="新建项目"><NewProject /></IB><IB label="打开"><OpenIcon /></IB><Drop label="打开选项" />
          <IB label="保存"><SaveIcon /></IB><IB label="目录"><FolderIcon /></IB>
        </Group>
        <Group>
          <IB label="剪切"><CutIcon /></IB><IB label="复制"><CopyIcon /></IB><IB label="粘贴"><PasteIcon /></IB><IB label="删除"><DelIcon /></IB><Sep />
          <IB label="撤销"><UndoIcon /></IB><Drop dim label="撤销选项" /><IB label="重做"><RedoIcon /></IB><Drop dim label="重做选项" />
        </Group>
        <Group>
          <TB icon={<CheckSheet />}>单位工程自检</TB><TB icon={<BudgetIcon />}>预算书设置</TB><Sep />
          <On icon={<PropIcon />}>属性窗口</On><Sep />
          <span className="w-[2px]" />
          <TB icon={<QuoteIcon />}>多方案报价</TB><Drop label="报价选项" />
          <TB icon={<FeeIcon />}>费用查看</TB>
          <label className="flex items-center gap-2 pr-1"><input type="checkbox" className="size-3 appearance-none border border-[#999] bg-[#f6f6f6]" />局部汇总</label>
        </Group>
        <Group>
          <IB label="首条"><Nav d="M3 3h2v10H3zM12 3v10L6 8z" /></IB><IB label="上一条"><Nav d="M11 3v10L5 8z" /></IB><IB label="下一条"><Nav d="M5 3v10l6-5z" /></IB><IB label="末条"><Nav d="M11 3h2v10h-2zM4 3v10l6-5z" /></IB>
        </Group>
        <Group>
          <IB label="左移"><BlockArrow r={-90} /></IB><IB label="右移"><BlockArrow r={90} /></IB><IB label="上移"><BlockArrow /></IB><IB label="下移"><BlockArrow r={180} /></IB>
        </Group>
        <Group>
          <IB label="计算器"><CalcIcon /></IB><IB label="函数"><FxIcon /></IB><IB label="段落"><ParaIcon /></IB><IB label="立方体"><CubeIcon /></IB><IB label="查找表"><FindSheet /></IB><IB label="列表"><ListIcon /></IB>
          <Sep /><button className="px-[5px]">返回项目管理</button>
        </Group>
      </div>

      <div className="flex min-h-0 flex-1">
        <SideTabs />
        <i className="w-1 shrink-0" />
        <SectionPanel />
        <div className="flex w-[7px] shrink-0 flex-col items-center justify-center">
          <i className="flex h-[99px] w-[6px] flex-col items-center justify-between border border-[#888] bg-[#f4f4f4] py-[5px]"><i className="size-px bg-[#000080]" /><i className="size-px bg-[#000080]" /></i>
        </div>
        <main className="flex min-w-0 flex-1 flex-col pb-[3px]">
          <div className={`flex h-[27px] shrink-0 items-center pl-px whitespace-nowrap ${UI}`}>
            <Group>
              <span className="w-1" />
              <Menu>插入</Menu><Menu>添加</Menu><Menu tight>补充</Menu><Menu>查询</Menu><Menu>存档</Menu>
              <Binoc /><span className="w-1" /><Sep /><span className="w-[6px]" />
              <Menu tight>整理清单</Menu><Menu>安装费用</Menu><Menu>单价构成</Menu><Menu>批量换算</Menu><Menu tight>其他</Menu>
              <Menu tight icon={<ExpandIcon />}>展开到</Menu><Menu tight>重用组价</Menu><Sep />
              <On icon={<LockIcon />}>解除清单锁定</On>
              <IB label="填充"><PaintIcon /></IB><Drop label="填充颜色" /><Sep />
              <IB label="上移清单"><BlockArrow blue /></IB><IB label="下移清单"><BlockArrow r={180} blue /></IB>
              <button className="flex items-center gap-1 px-1 text-[#777]"><ExtractIcon />提取图形工程量</button>
            </Group>
          </div>
          <TopGrid />
          <div className="flex min-h-0 flex-1">
            <Lower />
            <FilterPanel />
          </div>
        </main>
      </div>

      <div className="flex h-[20px] shrink-0 gap-[2px] overflow-hidden">
        {status.map(([t, w]) => <div key={t} className={`${w} min-w-0 overflow-hidden border border-[#d7d7d7] bg-[#f4f4f4] pl-px leading-[18px] whitespace-nowrap`}>{t}</div>)}
      </div>
      <TaskBar />

      <QueryDialog />
      <i className="pointer-events-none absolute top-[141px] left-[549px] h-[73px] w-[349px] border-3 border-[#fe0000]" />
      <i className="pointer-events-none absolute top-[315px] left-[433px] h-[53px] w-[184px] border-3 border-[#fe0000]" />
      <div className="absolute -top-[27px] left-[571px] flex size-[45px] items-end justify-center rounded-full border border-[#e8e8e8] bg-linear-to-b from-[#2fa84c] to-[#4cc864] pb-1 font-['DejaVu_Sans',sans-serif] text-[11px] leading-[14px] font-bold text-white shadow-[0_2px_6px_rgba(0,0,0,0.5)]">79</div>
      <ImeBar />
    </div>
  );
}
